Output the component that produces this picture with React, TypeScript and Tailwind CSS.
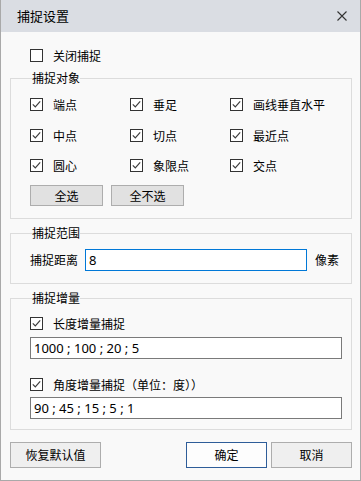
import React from 'react';

const Check: React.FC<{ checked?: boolean }> = ({ checked = true }) => (
  <span className="w-[13px] h-[13px] shrink-0 border border-[#333333] bg-white flex items-center justify-center">
    {checked && (
      <svg width="11" height="11" viewBox="0 0 11 11">
        <path d="M1.8 5.3 L4.3 7.8 L9.2 2.4" fill="none" stroke="#3c3c3c" strokeWidth="1.2" />
      </svg>
    )}
  </span>
);

const CheckItem: React.FC<{ label: string; checked?: boolean }> = ({ label, checked }) => (
  <div className="flex items-center h-[13px]">
    <Check checked={checked} />
    <span className="ml-[10px] leading-[16px] whitespace-nowrap">{label}</span>
  </div>
);

const snapRows = [
  { cls: 'mt-[12px]', items: ['端点', '垂足', '画线垂直水平'] },
  { cls: 'mt-[18px]', items: ['中点', '切点', '最近点'] },
  { cls: 'mt-[17px]', items: ['圆心', '象限点', '交点'] },
];

const App: React.FC = () => {
  return (
    <div className="w-[361px] h-[481px] flex flex-col bg-[#f9f9f9] border-x border-b border-[#a9a9a9] font-['Noto_Sans_CJK_SC',sans-serif] text-[12px] text-black">
      {/* Title bar */}
      <div className="h-[32px] shrink-0 bg-[#dadde3] flex items-center justify-between pl-[16px] pr-[13px]">
        <span className="text-[13px] leading-[16px]">捕捉设置</span>
        <svg width="10" height="10" viewBox="0 0 10 10">
          <path d="M0.5 0.5 L9.5 9.5 M9.5 0.5 L0.5 9.5" stroke="#333333" strokeWidth="1.1" />
        </svg>
      </div>

      <div className="mt-[17px] pl-[29px]">
        <CheckItem label="关闭捕捉" checked={false} />
      </div>

      {/* 捕捉对象 */}
      <fieldset className="mt-[8px] ml-[9px] w-[342px] border border-[#dcdcdc]">
        <legend className="ml-[21px] leading-[16px]">捕捉对象</legend>
        {snapRows.map((row, i) => (
          <div key={i} className={`${row.cls} pl-[19px] grid grid-cols-[100px_100px_100px]`}>
            {row.items.map(label => (
              <CheckItem key={label} label={label} />
            ))}
          </div>
        ))}
        <div className="mt-[13px] mb-[12px] pl-[19px] flex gap-[8px]">
          <button className="w-[73px] h-[21px] bg-[#e1e1e1] border border-[#adadad] leading-[16px]">全选</button>
          <button className="w-[73px] h-[21px] bg-[#e1e1e1] border border-[#adadad] leading-[16px]">全不选</button>
        </div>
      </fieldset>

      {/* 捕捉范围 */}
      <fieldset className="mt-[6px] ml-[9px] w-[342px] border border-[#dcdcdc]">
        <legend className="ml-[21px] leading-[16px]">捕捉范围</legend>
        <div className="mt-[8px] mb-[12px] pl-[19px] flex items-center">
          <span className="whitespace-nowrap">捕捉距离</span>
          <input
            readOnly
            value="8"
            className="ml-[7px] w-[222px] h-[22px] border border-[#0078d7] bg-white px-[3px] font-['Noto_Sans',sans-serif] text-[13px] outline-none"
          />
          <span className="ml-[8px] whitespace-nowrap">像素</span>
        </div>
      </fieldset>

      {/* 捕捉增量 */}
      <fieldset className="mt-[6px] ml-[9px] w-[342px] border border-[#dcdcdc]">
        <legend className="ml-[21px] leading-[16px]">捕捉增量</legend>
        <div className="mt-[11px] pl-[19px]">
          <CheckItem label="长度增量捕捉" />
        </div>
        <input
          readOnly
          value="1000 ; 100 ; 20 ; 5"
          className="block mt-[7px] ml-[19px] w-[312px] h-[22px] border border-[#7a7a7a] bg-white px-[3px] font-['Noto_Sans',sans-serif] text-[13px] outline-none"
        />
        <div className="mt-[19px] pl-[19px]">
          <CheckItem label="角度增量捕捉（单位：度））" />
        </div>
        <input
          readOnly
          value="90 ; 45 ; 15 ; 5 ; 1"
          className="block mt-[6px] mb-[10px] ml-[19px] w-[312px] h-[22px] border border-[#7a7a7a] bg-white px-[3px] font-['Noto_Sans',sans-serif] text-[13px] outline-none"
        />
      </fieldset>

      {/* Footer buttons */}
      <div className="mt-[12px] flex items-center pl-[9px] pr-[8px]">
        <button className="w-[91px] h-[26px] bg-[#efefef] border border-[#adadad] leading-[16px]">恢复默认值</button>
        <div className="flex-1" />
        <button className="w-[81px] h-[26px] bg-[#fdfdfd] border border-[#2e5d99] leading-[16px]">确定</button>
        <button className="ml-[4px] w-[81px] h-[26px] bg-[#efefef] border border-[#adadad] leading-[16px]">取消</button>
      </div>
    </div>
  );
};

export default App;
